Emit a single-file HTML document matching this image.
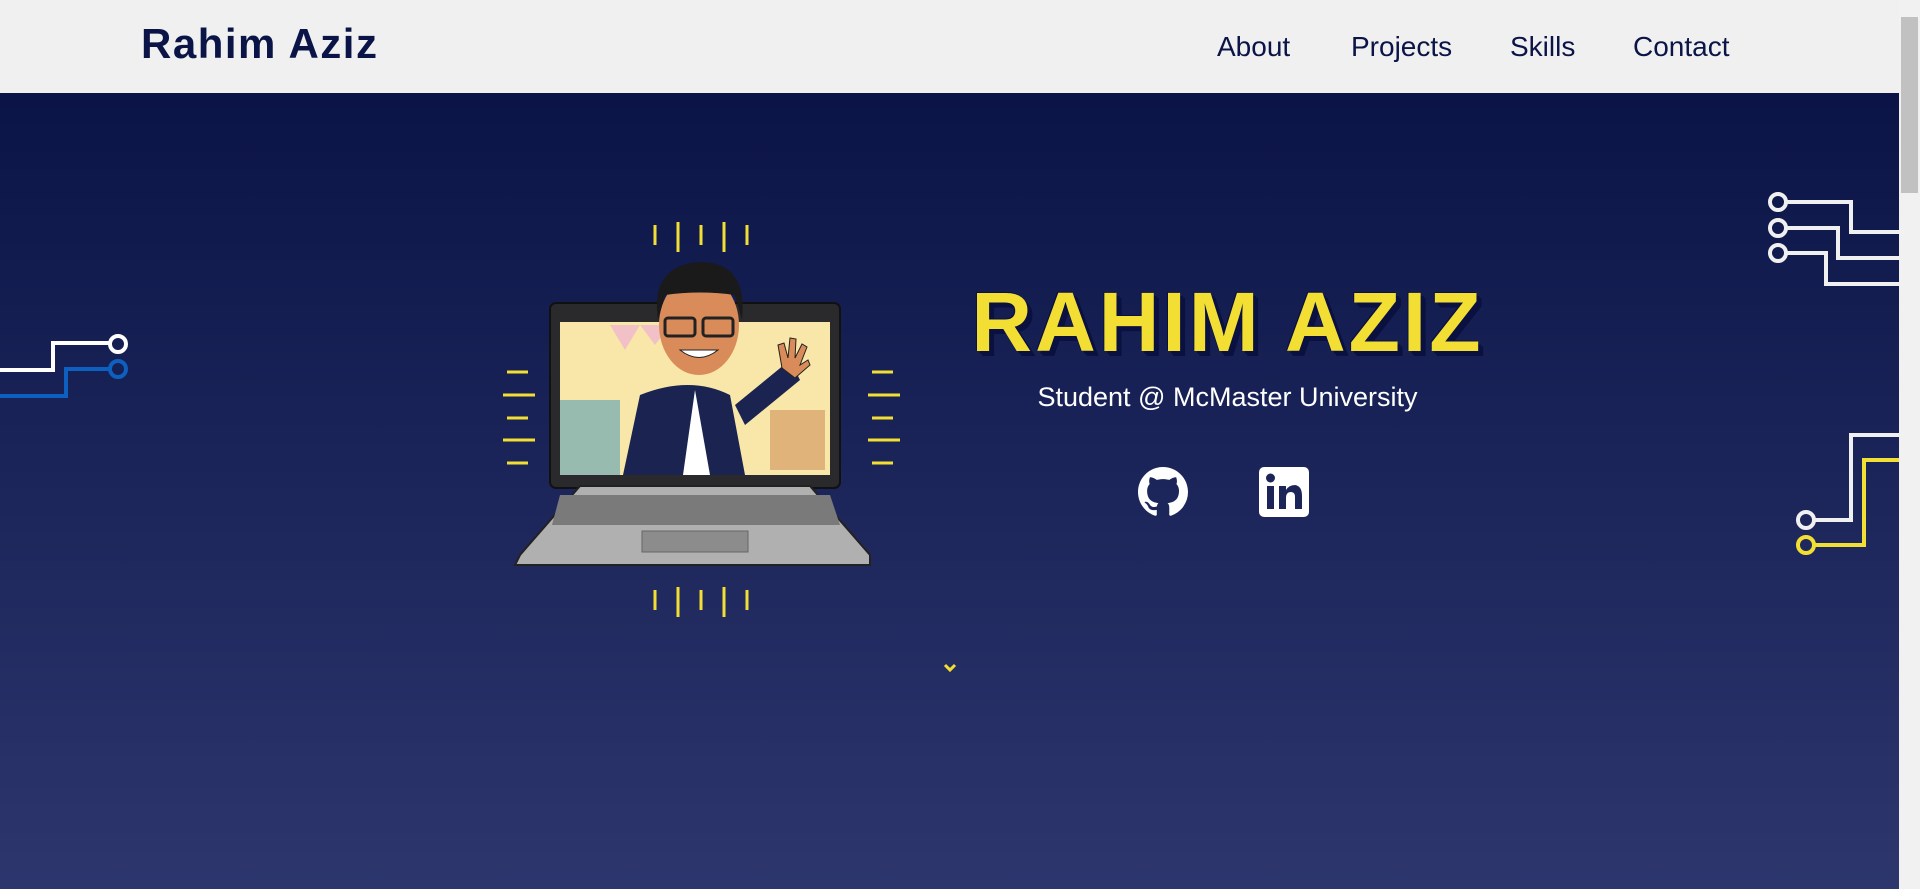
<!DOCTYPE html>
<html><head><meta charset="utf-8"><style>
*{margin:0;padding:0;box-sizing:border-box}
html,body{width:1920px;height:889px;overflow:hidden;font-family:"Liberation Sans",sans-serif}
.sb{position:absolute;left:1899px;top:0;width:21px;height:889px;background:#f1f1f1}
.sb div{position:absolute;left:2px;top:17px;width:17px;height:176px;background:#c1c1c1}
header{position:absolute;left:0;top:0;width:1899px;height:93px;background:#f0f0f0}
.logo{position:absolute;left:141px;top:20px;font-size:42px;font-weight:bold;color:#0b1446;letter-spacing:1.5px}
nav a{position:absolute;top:31px;font-size:28px;color:#0b1446;text-decoration:none}
.hero{position:absolute;left:0;top:93px;width:1899px;height:796px;background:linear-gradient(#0b1446,#2d376e)}
h1{position:absolute;left:960px;top:274px;width:535px;text-align:center;font-size:84px;font-weight:bold;color:#f3df33;letter-spacing:3px;text-shadow:5px 5px 0 #0a1040,3px 3px 0 #0a1040,-1px -1px 0 #0a1040}
.sub{position:absolute;left:950px;top:382px;width:555px;text-align:center;font-size:27px;color:#fff}
svg{position:absolute;left:0;top:0}
</style></head><body>
<div class="hero"></div>
<header><div class="logo">Rahim Aziz</div>
<nav><a style="left:1217px">About</a><a style="left:1351px">Projects</a><a style="left:1510px">Skills</a><a style="left:1633px">Contact</a></nav></header>
<h1>RAHIM AZIZ</h1>
<div class="sub">Student @ McMaster University</div>
<svg width="1899" height="889" viewBox="0 0 1899 889">
<g fill="none" stroke-width="4">
<path d="M0 370H53V343H110" stroke="#fff"/><circle cx="118" cy="344" r="8" stroke="#fff"/>
<path d="M0 396H66V369H110" stroke="#0d5fc0"/><circle cx="118" cy="369" r="8" stroke="#0d5fc0"/>
<g stroke="#f0f0f0">
<path d="M1786 202H1851V232H1899M1786 228H1838V258H1899M1786 253H1826V284H1899"/>
<circle cx="1778" cy="202" r="8"/><circle cx="1778" cy="228" r="8"/><circle cx="1778" cy="253" r="8"/>
<path d="M1814 520H1851V435H1899"/><circle cx="1806" cy="520" r="8"/></g>
<path d="M1814 545H1864V460H1899" stroke="#f3df33"/><circle cx="1806" cy="545" r="8" stroke="#f3df33"/>
<g stroke="#f3df33" stroke-width="3">
<path d="M655 225V245M678 222V252M701 225V245M724 222V252M747 225V245"/>
<path d="M655 590V610M678 587V617M701 590V610M724 587V617M747 590V610"/>
<path d="M507 372H528M503 395H535M507 418H528M503 440H535M507 463H528"/>
<path d="M872 372H893M868 395H900M872 418H893M868 440H900M872 463H893"/>
</g>
<path d="M945 665L950 670L955 665" stroke="#f3df33" stroke-width="3"/>
</g>
<!-- laptop -->
<rect x="550" y="303" width="290" height="185" rx="6" fill="#2a2a2c" stroke="#111" stroke-width="2"/>
<rect x="560" y="322" width="270" height="153" fill="#f8e7a8"/>
<path d="M610 325L640 325L625 350ZM640 325L670 325L655 345Z" fill="#f0b8d0" opacity=".8"/>
<rect x="560" y="400" width="60" height="75" fill="#7fb0b0" opacity=".8"/>
<rect x="770" y="410" width="55" height="60" fill="#d9a66e" opacity=".8"/>
<path d="M520 555L580 486H810L870 555V565H515Z" fill="#b0b0b0" stroke="#222" stroke-width="2"/>
<path d="M560 495H830L840 525H552Z" fill="#7a7a7a"/>
<rect x="642" y="531" width="106" height="21" fill="#8c8c8c" stroke="#666"/>
<!-- person -->
<path d="M623 475L640 395Q690 375 730 395L745 475Z" fill="#1b2450"/>
<path d="M695 390L710 475H683Z" fill="#fff"/>
<path d="M735 405L790 360L800 380L745 425Z" fill="#1b2450"/>
<path d="M782 368L778 345L784 343L788 358L790 338L796 339L795 358L802 344L807 347L800 365L808 360L810 365L795 378Z" fill="#d98c5a" stroke="#222"/>
<ellipse cx="699" cy="325" rx="40" ry="50" fill="#d98c5a"/>
<path d="M658 320Q650 265 700 262Q748 262 742 320L735 295Q700 290 665 295Z" fill="#1a1a1a"/>
<rect x="665" y="318" width="30" height="18" rx="3" fill="none" stroke="#222" stroke-width="3"/>
<rect x="703" y="318" width="30" height="18" rx="3" fill="none" stroke="#222" stroke-width="3"/>
<path d="M680 350Q699 365 718 350Z" fill="#fff" stroke="#222"/>
<!-- icons -->
<path transform="translate(1138,467) scale(3.125)" fill="#fff" d="M8 0C3.58 0 0 3.58 0 8c0 3.54 2.29 6.53 5.47 7.59.4.07.55-.17.55-.38 0-.19-.01-.82-.01-1.49-2.01.37-2.53-.49-2.69-.94-.09-.23-.48-.94-.82-1.130-.28-.15-.68-.52-.01-.53.63-.01 1.080.58 1.230.82.72 1.21 1.87.87 2.33.66.07-.52.28-.87.51-1.07-1.78-.2-3.64-.89-3.64-3.95 0-.87.31-1.59.82-2.15-.08-.2-.36-1.02.08-2.12 0 0 .67-.21 2.2.82.64-.18 1.32-.27 2-.27.68 0 1.36.09 2 .27 1.53-1.04 2.2-.82 2.2-.82.44 1.1.16 1.92.08 2.12.51.56.82 1.27.82 2.15 0 3.07-1.87 3.75-3.65 3.95.29.25.54.73.54 1.48 0 1.07-.01 1.93-.01 2.2 0 .21.15.46.55.38A8.013 8.013 0 0016 8c0-4.42-3.58-8-8-8z"/>
<rect x="1259" y="467" width="50" height="50" rx="5" fill="#fff"/>
<rect x="1267" y="486" width="7" height="23" fill="#1c2558"/><circle cx="1270.5" cy="478" r="4.5" fill="#1c2558"/>
<path d="M1279 486H1286V490Q1289 485 1295 485Q1302 486 1302 496V509H1295V497Q1295 492 1291 492Q1286 492 1286 498V509H1279Z" fill="#1c2558"/>
</svg>
<div class="sb"><div></div></div>
</body></html>
